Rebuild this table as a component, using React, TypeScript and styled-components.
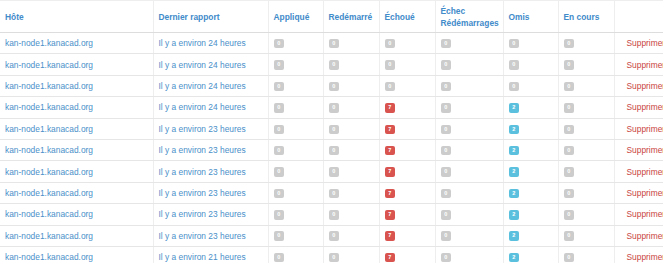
import React from "react";
import styled, { createGlobalStyle } from "styled-components";

const GlobalStyle = createGlobalStyle`
  html, body {
    margin: 0;
    padding: 0;
    background: #ffffff;
    overflow: hidden;
  }
  body {
    font-family: "Liberation Sans", Arial, sans-serif;
  }
`;

const Table = styled.table`
  width: 680px;
  border-collapse: collapse;
  table-layout: fixed;
  font-size: 8.4px;
  border-top: 1px solid #eeeeee;
`;

const Col = styled.col<{ w?: number }>`
  width: ${({ w }) => (w ? `${w}px` : "auto")};
`;

const HeadCell = styled.th`
  box-sizing: border-box;
  height: 32px;
  padding: 0 5px;
  text-align: left;
  vertical-align: middle;
  font-weight: bold;
  line-height: 12px;
  color: #428bca;
  border-bottom: 1px solid #dddddd;
  border-left: 1px solid #eeeeee;

  &:first-child {
    border-left: none;
  }
`;

const Row = styled.tr`
  height: 21.4px;
`;

const Cell = styled.td`
  box-sizing: border-box;
  padding: 0 5px;
  vertical-align: middle;
  white-space: nowrap;
  overflow: visible;
  border-bottom: 1px solid #e6e6e6;
  border-left: 1px solid #eeeeee;
  line-height: 10px;

  &:first-child {
    border-left: none;
  }
`;

const Link = styled.span`
  color: #4a8fc9;
`;

const Delete = styled.span`
  display: inline-block;
  padding-left: 7px;
  color: #c9453f;
`;

const Badge = styled.span<{ tone: "none" | "danger" | "info" }>`
  display: inline-block;
  min-width: 10.5px;
  height: 9.5px;
  line-height: 9.5px;
  border-radius: 2px;
  text-align: center;
  font-size: 5.5px;
  font-weight: bold;
  color: #ffffff;
  vertical-align: middle;
  background: ${({ tone }) =>
    tone === "danger" ? "#d9534f" : tone === "info" ? "#5bc0de" : "#cccccc"};
`;

type Report = {
  age: number;
  failed: number;
  skipped: number;
};

const reports: Report[] = [
  { age: 24, failed: 0, skipped: 0 },
  { age: 24, failed: 0, skipped: 0 },
  { age: 24, failed: 0, skipped: 0 },
  { age: 24, failed: 7, skipped: 2 },
  { age: 23, failed: 7, skipped: 2 },
  { age: 23, failed: 7, skipped: 2 },
  { age: 23, failed: 7, skipped: 2 },
  { age: 23, failed: 7, skipped: 2 },
  { age: 23, failed: 7, skipped: 2 },
  { age: 23, failed: 7, skipped: 2 },
  { age: 21, failed: 7, skipped: 2 },
];

const widths = [153, 115, 55, 56, 56, 68, 55, 56];

const Count: React.FC<{ value: number; tone: "danger" | "info" }> = ({
  value,
  tone,
}) => <Badge tone={value > 0 ? tone : "none"}>{value}</Badge>;

const App: React.FC = () => {
  return (
    <>
      <GlobalStyle />
      <Table>
        <colgroup>
          {widths.map((w, i) => (
            <Col key={i} w={w} />
          ))}
          <Col />
        </colgroup>
        <thead>
          <tr>
            <HeadCell>Hôte</HeadCell>
            <HeadCell>Dernier rapport</HeadCell>
            <HeadCell>Appliqué</HeadCell>
            <HeadCell>Redémarré</HeadCell>
            <HeadCell>Échoué</HeadCell>
            <HeadCell>
              Échec
              <br />
              Rédémarrages
            </HeadCell>
            <HeadCell>Omis</HeadCell>
            <HeadCell>En cours</HeadCell>
            <HeadCell />
          </tr>
        </thead>
        <tbody>
          {reports.map((r, i) => (
            <Row key={i}>
              <Cell>
                <Link>kan-node1.kanacad.org</Link>
              </Cell>
              <Cell>
                <Link>Il y a environ {r.age} heures</Link>
              </Cell>
              <Cell>
                <Badge tone="none">0</Badge>
              </Cell>
              <Cell>
                <Badge tone="none">0</Badge>
              </Cell>
              <Cell>
                <Count value={r.failed} tone="danger" />
              </Cell>
              <Cell>
                <Badge tone="none">0</Badge>
              </Cell>
              <Cell>
                <Count value={r.skipped} tone="info" />
              </Cell>
              <Cell>
                <Badge tone="none">0</Badge>
              </Cell>
              <Cell>
                <Delete>Supprimer</Delete>
              </Cell>
            </Row>
          ))}
        </tbody>
      </Table>
    </>
  );
};

export default App;
